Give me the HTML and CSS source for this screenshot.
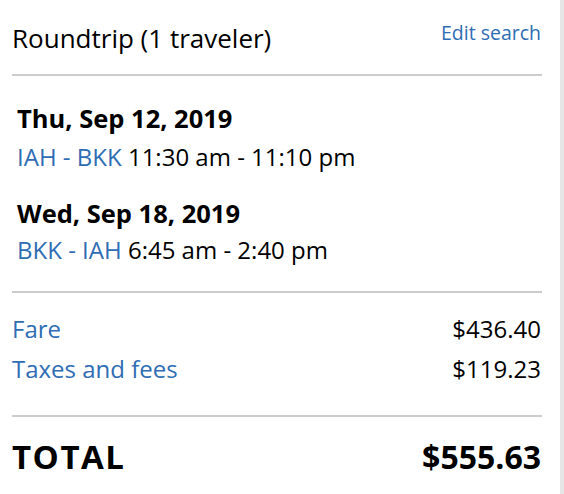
FILE: index.html
```html
<!DOCTYPE html>
<html>
<head>
<meta charset="utf-8">
<link rel="stylesheet" href="styles.css">
</head>
<body>
<div class="panel">
  <div class="header">
    <div class="title">Roundtrip (1 traveler)</div>
    <a class="edit">Edit search</a>
  </div>
  <div class="flights">
    <div class="flight">
      <div class="date">Thu, Sep 12, 2019</div>
      <div class="route"><span class="link">IAH - BKK</span> 11:30 am - 11:10 pm</div>
    </div>
    <div class="flight">
      <div class="date">Wed, Sep 18, 2019</div>
      <div class="route"><span class="link">BKK - IAH</span> 6:45 am - 2:40 pm</div>
    </div>
  </div>
  <div class="prices">
    <div class="row"><span class="link">Fare</span><span>$436.40</span></div>
    <div class="row"><span class="link">Taxes and fees</span><span>$119.23</span></div>
  </div>
  <div class="total">
    <span class="total-label">TOTAL</span><span class="total-amount">$555.63</span>
  </div>
</div>
</body>
</html>
```
FILE: styles.css
```css
html, body {
  margin: 0;
  padding: 0;
}
body {
  background: #e6e6e6;
  font-family: "Open Sans", "Liberation Sans", sans-serif;
  color: #000;
}
.panel {
  width: 560px;
  height: 494px;
  background: #fff;
  box-sizing: border-box;
  padding: 0 18px 0 12px;
}
.header {
  display: flex;
  justify-content: space-between;
  align-items: flex-start;
  padding: 20px 0 18px;
  border-bottom: 2px solid #cccccc;
}
.title {
  font-size: 26px;
  line-height: 36px;
}
.edit {
  font-size: 19.5px;
  line-height: 26px;
  color: #2e6db4;
  margin-right: 1px;
}
.link {
  color: #2e6db4;
}
.flights {
  padding: 24px 0 23px 5px;
  border-bottom: 2px solid #cccccc;
}
.flight + .flight {
  margin-top: 20px;
}
.date {
  font-size: 25.5px;
  font-weight: 700;
  line-height: 36px;
}
.route {
  font-size: 24px;
  line-height: 36px;
  margin-top: 1px;
}
.flight:first-child .route {
  margin-top: 3px;
}
.prices {
  padding: 16px 1px 26px 0;
  border-bottom: 2px solid #cccccc;
}
.row {
  display: flex;
  justify-content: space-between;
  font-size: 24px;
  line-height: 40px;
}
.total {
  display: flex;
  justify-content: space-between;
  align-items: baseline;
  font-weight: 700;
  line-height: 44px;
  padding: 18px 1px 0 0;
}
.total-label {
  font-size: 33px;
  letter-spacing: 1.5px;
}
.total-amount {
  font-size: 32px;
}
```
